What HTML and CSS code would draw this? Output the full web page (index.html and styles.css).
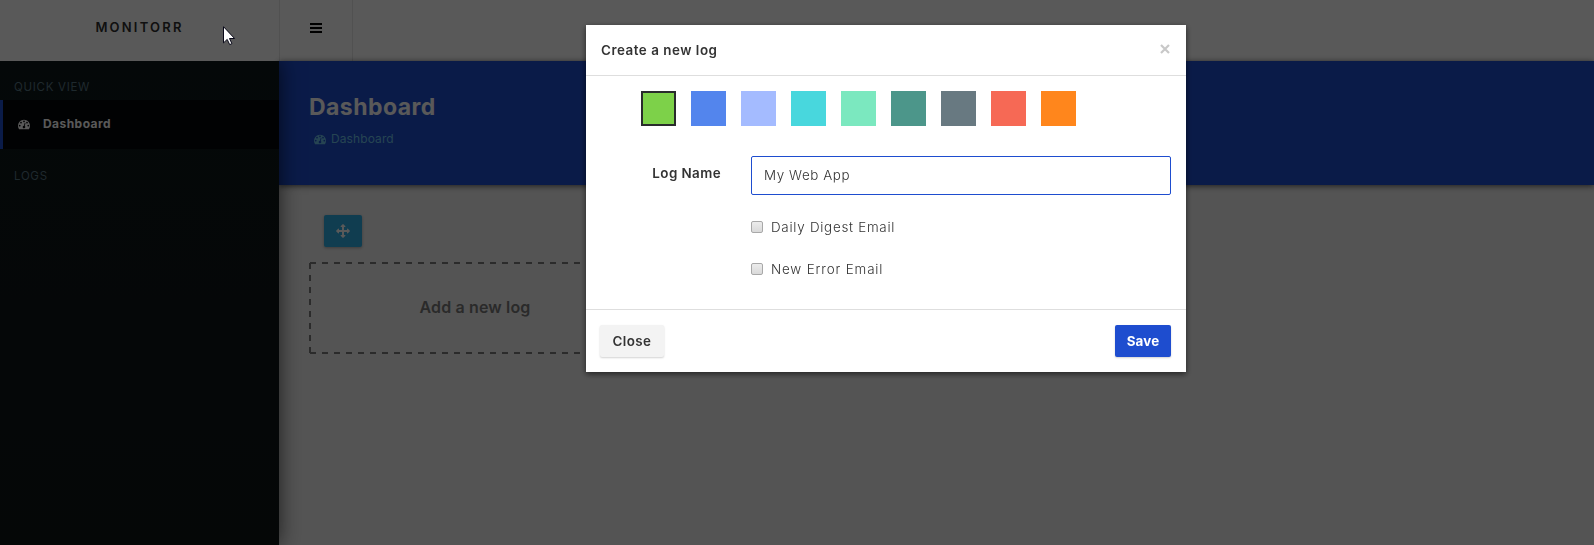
FILE: index.html
```html
<!DOCTYPE html>
<html lang="en">
<head>
<meta charset="utf-8">
<title>Monitorr</title>
<link rel="stylesheet" href="styles.css">
</head>
<body>
<svg class="defs" width="0" height="0">
  <symbol id="gauge" viewBox="0 0 1792 1792"><path d="M384 1152q0-53-37.5-90.5t-90.5-37.5-90.5 37.5-37.5 90.5 37.5 90.5 90.5 37.5 90.5-37.5 37.5-90.5zm192-448q0-53-37.5-90.5t-90.5-37.5-90.5 37.5-37.5 90.5 37.5 90.5 90.5 37.5 90.5-37.5 37.5-90.5zm428 481l101-382q6-26-7.5-48.5t-38.5-29.5-48 6.5-30 39.5l-101 382q-60 5-107 43.5t-63 98.5q-20 77 20 146t117 89 146-20 89-117q16-60-6-117t-72-91zm660-33q0-53-37.5-90.5t-90.5-37.5-90.5 37.5-37.5 90.5 37.5 90.5 90.5 37.5 90.5-37.5 37.5-90.5zm-640-640q0-53-37.5-90.5t-90.5-37.5-90.5 37.5-37.5 90.5 37.5 90.5 90.5 37.5 90.5-37.5 37.5-90.5zm448 192q0-53-37.5-90.5t-90.5-37.5-90.5 37.5-37.5 90.5 37.5 90.5 90.5 37.5 90.5-37.5 37.5-90.5zm320 448q0 261-141 483-19 29-54 29h-1402q-35 0-54-29-141-221-141-483 0-182 71-348t191-286 286-191 348-71 348 71 286 191 191 286 71 348z"/></symbol>
</svg>
<div class="app">
  <header class="topbar">
    <div class="brand">MONITORR</div>
    <button class="burger" aria-label="Toggle menu"><i></i><i></i><i></i></button>
  </header>
  <div class="body">
    <nav class="sidebar">
      <div class="nav-head">QUICK VIEW</div>
      <a class="nav-item"><svg class="nav-icon"><use href="#gauge"/></svg><span>Dashboard</span></a>
      <div class="nav-head logs">LOGS</div>
    </nav>
    <main class="main">
      <section class="hero">
        <h1 class="title">Dashboard</h1>
        <div class="crumb"><svg class="crumb-icon"><use href="#gauge"/></svg><span>Dashboard</span></div>
      </section>
      <section class="content">
        <button class="move" aria-label="Rearrange"><svg width="14" height="14" viewBox="0 0 1792 1792"><path d="M1792 896q0 26-19 45l-256 256q-19 19-45 19t-45-19-19-45v-128h-384v384h128q26 0 45 19t19 45-19 45l-256 256q-19 19-45 19t-45-19l-256-256q-19-19-19-45t19-45 45-19h128v-384h-384v128q0 26-19 45t-45 19-45-19l-256-256q-19-19-19-45t19-45l256-256q19-19 45-19t45 19 19 45v128h384v-384h-128q-26 0-45-19t-19-45 19-45l256-256q19-19 45-19t45 19l256 256q19 19 19 45t-19 45-45 19h-128v384h384v-128q0-26 19-45t45-19 45 19l256 256q19 19 19 45z"/></svg></button>
        <div class="add">Add a new log</div>
      </section>
    </main>
  </div>
</div>
<div class="overlay">
  <div class="modal">
    <div class="modal-head"><span>Create a new log</span><svg class="close-x" viewBox="0 0 10 10"><path d="M1 1l8 8M9 1L1 9"/></svg></div>
    <div class="modal-body">
      <div class="swatches">
        <i class="sw green"></i><i class="sw blue"></i><i class="sw lilac"></i><i class="sw cyan"></i><i class="sw mint"></i><i class="sw teal"></i><i class="sw slate"></i><i class="sw coral"></i><i class="sw orange"></i>
      </div>
      <div class="form">
        <label class="label">Log Name</label>
        <div class="input">My Web App</div>
        <label class="check"><i class="box"></i><span class="daily">Daily Digest Email</span></label>
        <label class="check"><i class="box"></i><span class="error">New Error Email</span></label>
      </div>
    </div>
    <div class="modal-foot"><button class="btn">Close</button><button class="btn save">Save</button></div>
  </div>
</div>
<svg class="cursor" width="13" height="20" viewBox="0 0 13 20"><path d="M.5.7v16.2l3.7-3.5 2.5 5.2 2.2-1-2.4-5.1h5.1z"/></svg>
</body>
</html>
```
FILE: styles.css
```css
* { box-sizing: border-box; }
body { margin: 0; height: 545px; overflow: hidden; font-family: Inter, "Liberation Sans", sans-serif; font-size: 13.4px; line-height: 20px; color: #333; }
button { border: 0; padding: 0; font: inherit; }
.defs { position: absolute; }
.app { height: 545px; display: flex; flex-direction: column; }
.topbar { height: 61px; display: flex; background: #fff; }
.brand { width: 279px; padding-top: 17px; text-align: center; font-size: 13px; font-weight: 600; letter-spacing: 2.2px; color: #303030; }
.burger { width: 74px; display: flex; flex-direction: column; gap: 2px; align-items: center; padding-top: 23px; background: none; border: solid #e7e7e7; border-width: 0 1px; }
.burger i { width: 12px; height: 2px; background: #000; }
.body { flex: 1; display: flex; }
.sidebar { width: 279px; background: linear-gradient(#0e181a, #101416); position: relative; z-index: 1; box-shadow: 0 0 20px rgba(0,0,0,.65); clip-path: inset(0 -30px 0 0); }
.nav-head { height: 39px; padding: 16px 0 0 14px; font-size: 11.5px; letter-spacing: .7px; color: #587582; }
.logs { padding-top: 17px; }
.nav-item { height: 49px; display: flex; align-items: center; padding: 0 0 1px 15px; border-left: 3px solid #1e4dcf; background: #050609; font-size: 12px; font-weight: 700; letter-spacing: .45px; color: #fff; }
.nav-icon { width: 12px; height: 12px; margin-right: 13px; fill: #fff; }
.main { flex: 1; background: #f0f0f0; }
.hero { height: 124px; background: #1e4dcf; padding: 30px 0 0 30px; box-shadow: 0 1px 6px rgba(0,0,0,.65); }
.title { margin: 0; font-size: 23px; line-height: 32px; font-weight: 700; letter-spacing: .45px; color: #fff; }
.crumb { display: flex; align-items: center; height: 20px; margin-top: 6px; padding-left: 5px; font-size: 12px; letter-spacing: .1px; color: #6dc4ea; }
.crumb-icon { width: 12px; height: 12px; margin-right: 5px; fill: #6dc4ea; }
.content { padding: 30px; }
.move { display: flex; align-items: center; justify-content: center; width: 38px; height: 32px; margin-left: 15px; border-radius: 2px; background: #2fb0e6; box-shadow: 0 1px 3px rgba(0,0,0,.3); }
.move svg { fill: #fff; }
.add {
  --h: linear-gradient(90deg, #7c7c7c 50%, transparent 50%);
  --v: linear-gradient(#7c7c7c 50%, transparent 50%);
  width: 332px; height: 92px; margin-top: 15px;
  background: var(--h) 1px 0 / 12px 2px repeat-x, var(--h) 1px 100% / 12px 2px repeat-x, var(--v) 0 1px / 2px 12px repeat-y, var(--v) 100% 1px / 2px 12px repeat-y;
  display: flex; align-items: center; justify-content: center; padding-bottom: 2px; font-size: 16px; font-weight: 600; letter-spacing: .15px; color: #7a7a7a;
}
.overlay { position: fixed; inset: 0; display: flex; align-items: flex-start; padding: 25px 408px 0 586px; background: rgba(0,0,0,.65); z-index: 5; }
.modal { width: 600px; height: 347px; flex: none; background: #fff; box-shadow: 0 2px 6px rgba(0,0,0,.6); }
.modal-head { height: 51px; display: flex; justify-content: space-between; padding: 15px 16px 0 15px; border-bottom: 1px solid #dedede; font-weight: 600; letter-spacing: .52px; }
.close-x { width: 10px; height: 10px; margin-top: 4px; stroke: #c8c8c8; stroke-width: 2.2; fill: none; }
.modal-body { height: 233px; padding-top: 15px; }
.swatches { display: flex; gap: 15px; padding-left: 55px; }
.sw { width: 35px; height: 35px; }
.green { background: #7dd149; border: 2px solid #292b2c; }
.blue { background: #5385ed; }
.lilac { background: #a4bbff; }
.cyan { background: #48d7dd; }
.mint { background: #7be8bf; }
.teal { background: #4c968a; }
.slate { background: #687981; }
.coral { background: #f66955; }
.orange { background: #ff861c; }
.form { display: grid; grid-template-columns: 135px 420px; grid-template-rows: 39px 20px 20px; column-gap: 30px; row-gap: 22px; margin-top: 30px; }
.label { text-align: right; padding-top: 7px; font-weight: 600; letter-spacing: .42px; }
.input { border: 1px solid #1e4dcf; border-radius: 2px; padding: 8px 12px; font-weight: 350; letter-spacing: .58px; }
.check { grid-column: 2; display: flex; align-items: center; font-weight: 350; }
.daily { letter-spacing: .73px; }
.error { letter-spacing: .84px; }
.box { width: 12px; height: 12px; margin-right: 8px; border: 1px solid #a8a8a8; border-radius: 2px; background: linear-gradient(#ececec, #d9d9d9); }
.modal-foot { display: flex; justify-content: space-between; border-top: 1px solid #dedede; padding: 15px 15px 0 14px; }
.btn { width: 64px; height: 32px; border-radius: 2px; background: #f3f3f3; box-shadow: 0 1px 2px rgba(0,0,0,.18); font-weight: 600; letter-spacing: .4px; color: #333; }
.save { width: 56px; background: #1e4dcf; color: #fff; font-weight: 700; letter-spacing: .15px; }
.cursor { position: absolute; left: 223px; top: 26px; z-index: 9; fill: #fff; stroke: #080818; }
```
